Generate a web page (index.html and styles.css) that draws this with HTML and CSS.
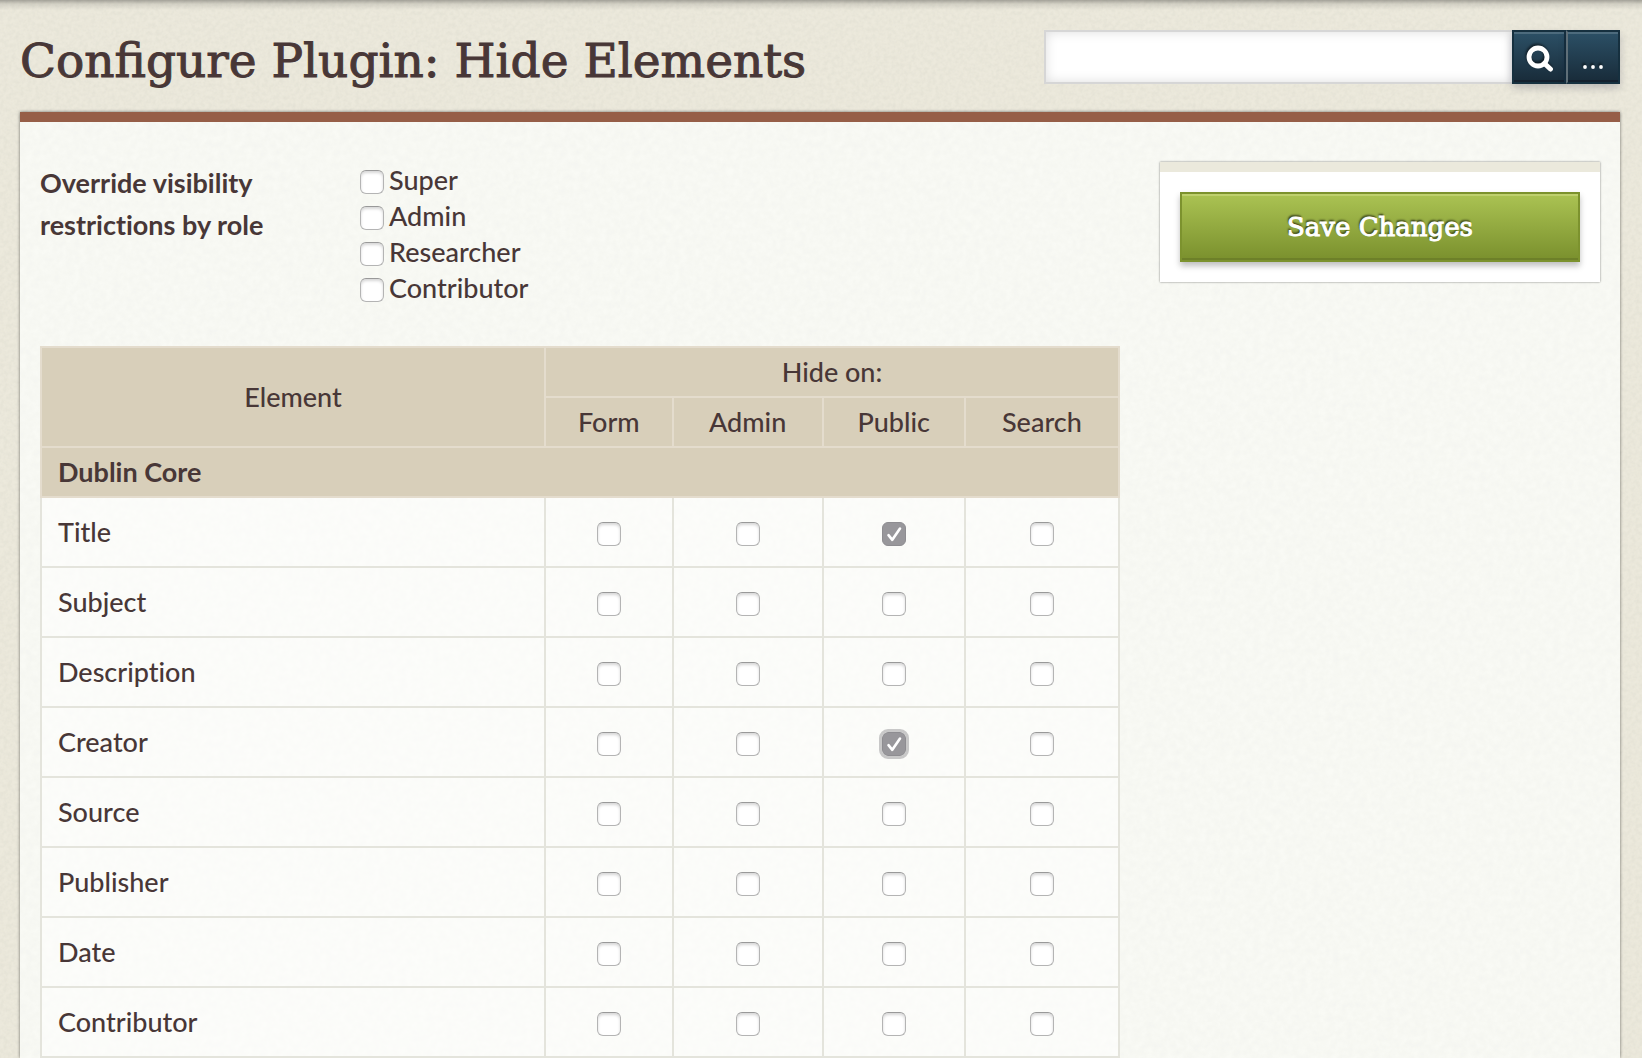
FILE: index.html
```html
<!DOCTYPE html>
<html lang="en">
<head>
<meta charset="utf-8">
<meta name="viewport" content="width=device-width, initial-scale=1">
<title>Configure Plugin: Hide Elements</title>
<link rel="stylesheet" href="styles.css">
</head>
<body>
<header class="page-header">
  <h1 class="page-title">Configure Plugin: Hide Elements</h1>
  <form class="search" role="search">
    <input class="search-input" type="text" aria-label="Search">
    <button class="search-button" type="submit" aria-label="Submit search">
      <svg class="search-icon" viewBox="0 0 28 28" aria-hidden="true"><circle cx="13" cy="14" r="9" fill="none" stroke="#fff" stroke-width="4.8"/><path d="M19.5 20.5 L25.4 26" stroke="#fff" stroke-width="5" stroke-linecap="round"/></svg>
    </button>
    <button class="search-button search-more" type="button" aria-label="Advanced options">
      <svg class="search-icon" viewBox="0 0 28 28" aria-hidden="true"><g fill="#fff"><circle cx="6" cy="24" r="1.9"/><circle cx="14" cy="24" r="1.9"/><circle cx="22" cy="24" r="1.9"/></g></svg>
    </button>
  </form>
</header>
<main class="content">
  <form class="config">
    <section class="settings">
      <fieldset class="field">
        <legend class="field-legend">Override visibility restrictions by role</legend>
        <div class="field-options">
          <label class="option"><input class="check" type="checkbox">Super</label>
          <label class="option"><input class="check" type="checkbox">Admin</label>
          <label class="option"><input class="check" type="checkbox">Researcher</label>
          <label class="option"><input class="check" type="checkbox">Contributor</label>
        </div>
      </fieldset>
      <table class="elements">
        <colgroup><col class="col-element"><col class="col-form"><col class="col-admin"><col class="col-public"><col class="col-search"></colgroup>
        <thead>
          <tr><th rowspan="2">Element</th><th colspan="4">Hide on:</th></tr>
          <tr><th>Form</th><th>Admin</th><th>Public</th><th>Search</th></tr>
        </thead>
        <tbody>
          <tr><th class="set-name" colspan="5">Dublin Core</th></tr>
          <tr><td>Title</td><td><input class="check" type="checkbox" aria-label="Title, form"></td><td><input class="check" type="checkbox" aria-label="Title, admin"></td><td><input class="check" type="checkbox" aria-label="Title, public" checked></td><td><input class="check" type="checkbox" aria-label="Title, search"></td></tr>
          <tr><td>Subject</td><td><input class="check" type="checkbox" aria-label="Subject, form"></td><td><input class="check" type="checkbox" aria-label="Subject, admin"></td><td><input class="check" type="checkbox" aria-label="Subject, public"></td><td><input class="check" type="checkbox" aria-label="Subject, search"></td></tr>
          <tr><td>Description</td><td><input class="check" type="checkbox" aria-label="Description, form"></td><td><input class="check" type="checkbox" aria-label="Description, admin"></td><td><input class="check" type="checkbox" aria-label="Description, public"></td><td><input class="check" type="checkbox" aria-label="Description, search"></td></tr>
          <tr><td>Creator</td><td><input class="check" type="checkbox" aria-label="Creator, form"></td><td><input class="check" type="checkbox" aria-label="Creator, admin"></td><td><input class="check check-focus" type="checkbox" aria-label="Creator, public" checked></td><td><input class="check" type="checkbox" aria-label="Creator, search"></td></tr>
          <tr><td>Source</td><td><input class="check" type="checkbox" aria-label="Source, form"></td><td><input class="check" type="checkbox" aria-label="Source, admin"></td><td><input class="check" type="checkbox" aria-label="Source, public"></td><td><input class="check" type="checkbox" aria-label="Source, search"></td></tr>
          <tr><td>Publisher</td><td><input class="check" type="checkbox" aria-label="Publisher, form"></td><td><input class="check" type="checkbox" aria-label="Publisher, admin"></td><td><input class="check" type="checkbox" aria-label="Publisher, public"></td><td><input class="check" type="checkbox" aria-label="Publisher, search"></td></tr>
          <tr><td>Date</td><td><input class="check" type="checkbox" aria-label="Date, form"></td><td><input class="check" type="checkbox" aria-label="Date, admin"></td><td><input class="check" type="checkbox" aria-label="Date, public"></td><td><input class="check" type="checkbox" aria-label="Date, search"></td></tr>
          <tr><td>Contributor</td><td><input class="check" type="checkbox" aria-label="Contributor, form"></td><td><input class="check" type="checkbox" aria-label="Contributor, admin"></td><td><input class="check" type="checkbox" aria-label="Contributor, public"></td><td><input class="check" type="checkbox" aria-label="Contributor, search"></td></tr>
        </tbody>
      </table>
    </section>
    <aside class="save-panel">
      <button class="save-button" type="submit">Save Changes</button>
    </aside>
  </form>
</main>
</body>
</html>
```

FILE: styles.css
```css
*, *::before, *::after { box-sizing: border-box; }

body {
  margin: 0;
  min-height: 100vh;
  padding: 0 22px 0 20px;
  display: flex;
  flex-direction: column;
  color: #483737;
  font: 500 27px/36px Lato, sans-serif;
  font-variant-ligatures: none;
  background:
    linear-gradient(rgba(0, 0, 0, .3), rgba(0, 0, 0, .1) 4px, rgba(0, 0, 0, 0) 10px) 0 0 / 100% 10px no-repeat,
    url("data:image/svg+xml,%3Csvg xmlns='http://www.w3.org/2000/svg' width='300' height='300'%3E%3Cfilter id='n'%3E%3CfeTurbulence type='fractalNoise' baseFrequency='.25' numOctaves='2' stitchTiles='stitch'/%3E%3CfeColorMatrix values='0 0 0 0 .4 0 0 0 0 .42 0 0 0 0 .36 .2 0 0 0 -.06'/%3E%3C/filter%3E%3Crect width='300' height='300' filter='url(%23n)'/%3E%3C/svg%3E"),
    #ece9dc;
}

.page-header {
  display: flex;
  align-items: flex-start;
  justify-content: space-between;
  gap: 20px;
  padding: 30px 0 28px;
}

.page-title {
  margin: 0;
  padding-top: 4px;
  font: 47px/54px "DejaVu Serif", serif;
  -webkit-text-stroke: 1px;
  margin-bottom: -4px;
}

.search {
  display: flex;
  flex: 0 1 576px;
}

.search-input {
  flex: 1;
  min-width: 0;
  height: 54px;
  padding: 0 12px;
  border: 2px solid #d6d6d6;
  border-right: 0;
  border-radius: 0;
  background: #fff;
  box-shadow: inset 0 0 12px #ddd;
  font: inherit;
  color: inherit;
}

.search-button {
  display: grid;
  place-items: center;
  width: 54px;
  height: 54px;
  padding: 0;
  border: 2px solid #16303f;
  background: linear-gradient(#2c5066, #182b39);
  box-shadow: inset 0 2px #4d6b7d, inset 0 -2px #14202e, 0 4px 8px rgba(0, 0, 40, .2);
}

.search-more {
  border-left-color: #5f6f78;
}

.search-icon {
  width: 28px;
  height: 28px;
  overflow: visible;
  filter: drop-shadow(-1px -2px 1px rgba(0, 0, 0, .5));
}

.content {
  flex: 1;
  padding: 40px 20px 0;
  border-top: 10px solid #965e47;
  background:
    url("data:image/svg+xml,%3Csvg xmlns='http://www.w3.org/2000/svg' width='300' height='300'%3E%3Cfilter id='n'%3E%3CfeTurbulence type='fractalNoise' baseFrequency='.15' numOctaves='2' stitchTiles='stitch'/%3E%3CfeColorMatrix values='0 0 0 0 .5 0 0 0 0 .5 0 0 0 0 .45 .1 0 0 0 -.02'/%3E%3C/filter%3E%3Crect width='300' height='300' filter='url(%23n)'/%3E%3C/svg%3E"),
    #f9faf5;
  box-shadow: 0 0 3px rgba(0, 0, 0, .55);
}

.config {
  display: grid;
  grid-template-columns: 27fr 11fr;
  align-items: start;
  gap: 40px;
}

.field {
  display: flex;
  margin: 0;
  padding: 0 0 40px;
  border: 0;
}

.field-legend {
  float: left;
  width: 320px;
  padding: 0 80px 0 0;
  font-weight: 700;
  line-height: 42px;
}

.field-options {
  display: flex;
  flex-direction: column;
}

.option {
  display: flex;
  align-items: center;
  gap: 5px;
}

.check {
  appearance: none;
  display: block;
  width: 24px;
  height: 24px;
  margin: 4px 0 0;
  border: 1px solid #b4b4b4;
  border-top-color: #999;
  border-radius: 6px;
  background: #fff;
  box-shadow: inset 0 2px 3px rgba(0, 0, 0, .16);
}

.check:checked {
  border-color: #8e8d91;
  background: #98979b url("data:image/svg+xml,%3Csvg xmlns='http://www.w3.org/2000/svg' viewBox='0 0 22 22'%3E%3Cpath d='M5.5 12.2 9.3 16.8 17 5.5' fill='none' stroke='%23fff' stroke-width='2.6' stroke-linecap='round' stroke-linejoin='round'/%3E%3C/svg%3E") center / 22px 22px;
  box-shadow: none;
}

.check-focus {
  outline: 3px solid #c8c8c8;
}

.elements {
  width: 100%;
  table-layout: fixed;
  border-collapse: collapse;
}

.col-element { width: 46.75%; }
.col-form { width: 11.85%; }
.col-admin { width: 13.9%; }
.col-public { width: 13.2%; }
.col-search { width: 14.3%; }

.elements th {
  padding: 6px 16px;
  border: 2px solid #e4dccd;
  background: #d8cfba;
  font-weight: 500;
}

.elements .set-name {
  font-weight: 700;
  text-align: left;
}

.elements td {
  padding: 16px;
  border: 2px solid #e4e4dc;
  background: rgba(255, 255, 255, .5);
}

.elements td .check {
  margin: 4px auto 0;
}

.save-panel {
  padding: 20px;
  border-top: 10px solid #ebe9dc;
  background: #fff;
  box-shadow: 0 0 2px rgba(0, 0, 0, .5);
}

.save-button {
  display: block;
  width: 100%;
  height: 70px;
  border: 2px solid #7c922e;
  background: linear-gradient(#abc353, #7a902d);
  box-shadow: inset 0 2px #bfd06f, inset 0 -2px #6d8029, 0 4px 6px rgba(0, 0, 0, .25);
  color: #fff;
  font: 26px/36px "DejaVu Serif", serif;
  -webkit-text-stroke: 1px;
  text-shadow: -1px -2px 2px rgba(0, 0, 0, .7);
}
```
